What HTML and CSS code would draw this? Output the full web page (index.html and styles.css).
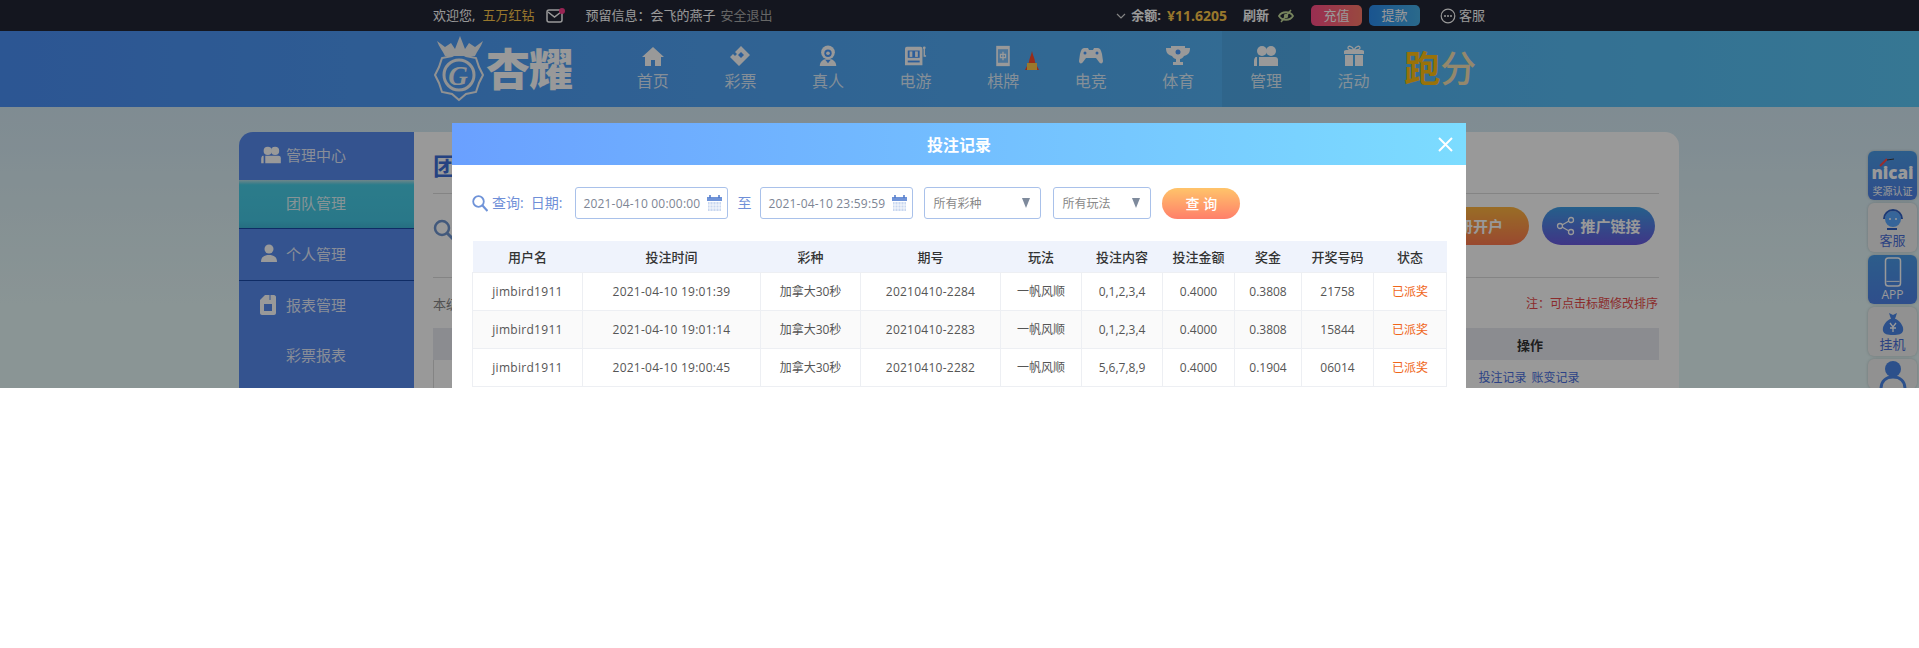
FILE: index.html
```html
<!DOCTYPE html>
<html lang="zh">
<head>
<meta charset="utf-8">
<title>投注记录</title>
<link rel="stylesheet" href="styles.css">
</head>
<body>
<div class="page">
  <div class="topbar">
    <div class="topbar-in">
      <span>欢迎您,</span><span class="gold name">五万红钻</span>
      <span class="mail"><svg width="19" height="15" viewBox="0 0 19 15"><rect x="1" y="2" width="15" height="12" rx="2" fill="none" stroke="#fff" stroke-width="1.5"/><path d="M2 4l6.500 5 6.500-5" fill="none" stroke="#fff" stroke-width="1.500"/><circle cx="16" cy="3" r="3" fill="#ff3d8b"/></svg></span>
      <span class="info">预留信息：会飞的燕子</span><span class="logout">安全退出</span>
      <div class="top-right">
        <svg class="chev" width="10" height="6" viewBox="0 0 10 6"><path d="M1 1l4 4 4-4" fill="none" stroke="#ddd" stroke-width="1.200"/></svg>
        <b class="bal">余额:</b><b class="gold money">¥11.6205</b>
        <b class="refresh">刷新</b>
        <svg class="eye" width="16" height="14" viewBox="0 0 16 14"><path d="M1 7c3-5 11-5 14 0-3 5-11 5-14 0z" fill="none" stroke="#c6dc9c" stroke-width="1.800"/><circle cx="8" cy="7" r="2.200" fill="#c6dc9c"/><path d="M13 1L3 13" stroke="#c6dc9c" stroke-width="1.500"/></svg>
        <span class="tbtn red">充值</span><span class="tbtn blue">提款</span>
        <svg class="chat" width="16" height="16" viewBox="0 0 16 16"><circle cx="8" cy="8" r="6.800" fill="none" stroke="#fff" stroke-width="1.200"/><circle cx="5" cy="8" r="1" fill="#fff"/><circle cx="8" cy="8" r="1" fill="#fff"/><circle cx="11" cy="8" r="1" fill="#fff"/></svg>
        <span class="kefu">客服</span>
      </div>
    </div>
  </div>

  <header class="header">
    <div class="header-in">
      <div class="logo">
        <svg width="54" height="68" viewBox="0 0 54 68"><path d="M4 6C6 12 10 16 12 21H42C44 16 48 12 50 6L42 12 36 8 32 14 27 1 22 14 18 8 12 12z" fill="#f2f3f4"/><path d="M26 65L19 59 9 57 6 48 2 40 6 32 9 23 19 21 26 17 33 21 43 23 46 32 50 40 46 48 43 57 33 59z" fill="none" stroke="#f2f3f4" stroke-width="2"/><circle cx="26" cy="40" r="15" fill="none" stroke="#f2f3f4" stroke-width="3"/><text x="25" y="50" text-anchor="middle" class="logo-g">G</text></svg>
        <span class="logo-text">杏耀</span>
      </div>
      <nav class="nav">
        <a class="nav-item"><svg width="24" height="22" viewBox="0 0 24 22"><path d="M12 2L1 12h3v9h6v-6h4v6h6v-9h3z" fill="#fff"/></svg><span>首页</span></a>
        <a class="nav-item"><svg width="24" height="22" viewBox="0 0 24 22"><path d="M13 1l9 9-11 11-9-9 3-3 2 2 2-2-2-2z" fill="#fff"/><path d="M13 7l3 3-3 3-3-3z" fill="#4a9cff"/></svg><span>彩票</span></a>
        <a class="nav-item"><svg width="24" height="24" viewBox="0 0 24 24"><circle cx="12" cy="8" r="7.500" fill="#fff"/><circle cx="12" cy="9" r="4" fill="#4a9cff"/><circle cx="12" cy="9" r="2" fill="#fff"/><path d="M3 23c0-5 4-8 9-8s9 3 9 8z" fill="#fff"/><path d="M9 16l3 4 3-4z" fill="#4a9cff"/></svg><span>真人</span></a>
        <a class="nav-item"><svg width="26" height="24" viewBox="0 0 26 24"><path d="M3 2h15c1 0 2 1 2 2v18H1V4c0-1 1-2 2-2z" fill="#fff"/><rect x="4" y="6" width="13" height="8" fill="#4a9cff"/><rect x="6" y="7" width="3" height="6" fill="#fff"/><rect x="12" y="7" width="3" height="6" fill="#fff"/><rect x="4" y="17" width="13" height="2" fill="#4a9cff"/><path d="M22 3v9h2" fill="none" stroke="#fff" stroke-width="1.500"/><circle cx="22" cy="3" r="1.500" fill="#fff"/></svg><span>电游</span></a>
        <a class="nav-item"><svg width="18" height="26" viewBox="0 0 18 26"><rect x="1" y="1" width="16" height="24" fill="#fff"/><rect x="3" y="5" width="12" height="16" fill="#7fc4ff"/><path d="M9 8v10M6 11h6v4H6z" fill="none" stroke="#fff" stroke-width="1.500"/></svg><span>棋牌</span>
          <svg class="hot" width="16" height="22" viewBox="0 0 16 22"><path d="M8 1c1 5 3 8 3 11l4 8H1l4-8c0-3 2-6 3-11z" fill="#ff4a2a"/><rect x="3" y="13" width="10" height="7" fill="#ffc84a"/></svg></a>
        <a class="nav-item"><svg width="26" height="22" viewBox="0 0 26 22"><path d="M6 3h4l1 2h4l1-2h4c2 0 3 2 4 6l1 7c0 3-3 3-4 1l-3-4H8l-3 4c-1 2-4 2-4-1l1-7c1-4 2-6 4-6z" fill="#fff"/><circle cx="7" cy="8" r="1.500" fill="#4a9cff"/><circle cx="19" cy="8" r="1.500" fill="#4a9cff"/></svg><span>电竞</span></a>
        <a class="nav-item"><svg width="24" height="22" viewBox="0 0 24 22"><path d="M5 1h14v2h5c0 5-2 7-6 8-1 2-3 3-4 3v3h3v3H7v-3h3v-3c-1 0-3-1-4-3-4-1-6-3-6-8h5z" fill="#fff"/><circle cx="12" cy="7" r="2.500" fill="#4a9cff"/></svg><span>体育</span></a>
        <a class="nav-item on"><svg width="26" height="22" viewBox="0 0 26 22"><circle cx="9" cy="6" r="5" fill="#fff"/><circle cx="18" cy="6" r="5" fill="#fff"/><path d="M6 12h16c2 0 3 1 3 3v6H6z" fill="#fff"/><path d="M4 12h-1c-1 0-2 2-2 4v5h3z" fill="#fff"/></svg><span>管理</span></a>
        <a class="nav-item"><svg width="22" height="22" viewBox="0 0 22 22"><path d="M3 5h16c1 0 2 1 2 1v3H1V6s1-1 2-1zM2 10h8v11H2zM12 10h8v11h-8z" fill="#fff"/><path d="M11 5C9 1 5 0 5 3c0 2 4 2 6 2zm0 0c2-4 6-5 6-2 0 2-4 2-6 2z" fill="none" stroke="#fff" stroke-width="1.300"/></svg><span>活动</span></a>
      </nav>
      <div class="paofen"><span class="pao">跑</span><span class="fen">分</span></div>
    </div>
  </header>

  <main class="main">
    <aside class="side">
      <div class="side-item first"><span class="side-slot"><svg width="22" height="18" viewBox="0 0 26 22"><circle cx="9" cy="6" r="5" fill="#fff"/><circle cx="18" cy="6" r="5" fill="#fff"/><path d="M6 12h16c2 0 3 1 3 3v6H6z" fill="#fff"/><path d="M4 12h-1c-1 0-2 2-2 4v5h3z" fill="#fff"/></svg></span><span>管理中心</span></div>
      <div class="side-item sub active"><span>团队管理</span></div>
      <div class="side-item line"><span class="side-slot"><svg width="18" height="18" viewBox="0 0 18 18"><circle cx="9" cy="5" r="4.500" fill="#fff"/><path d="M1 18c0-5 3-7 8-7s8 2 8 7z" fill="#fff"/></svg></span><span>个人管理</span></div>
      <div class="side-item"><span class="side-slot"><svg width="16" height="21" viewBox="0 0 16 21"><path d="M5 1h9c1 0 2 1 2 2v16c0 1-1 2-2 2H2c-1 0-2-1-2-2V6z" fill="#fff"/><rect x="4" y="10" width="8" height="7" fill="#578aef"/><path d="M10 1v5" stroke="#578aef"/></svg></span><span>报表管理</span></div>
      <div class="side-item sub"><span>彩票报表</span></div>
    </aside>
    <section class="panel">
      <h1 class="panel-title">团队管理</h1>
      <div class="panel-tools">
        <svg class="tool-search" width="22" height="22" viewBox="0 0 22 22"><circle cx="9" cy="9" r="7" fill="none" stroke="#6f95cf" stroke-width="2.500"/><path d="M14 14l6 6" stroke="#6f95cf" stroke-width="3"/></svg>
        <span class="pbtn orange">注册开户</span>
        <span class="pbtn violet"><svg width="20" height="20" viewBox="0 0 20 20"><circle cx="15" cy="4" r="2.500" fill="none" stroke="#fff" stroke-width="1.300"/><circle cx="4" cy="10" r="2.500" fill="none" stroke="#fff" stroke-width="1.300"/><circle cx="15" cy="16" r="2.500" fill="none" stroke="#fff" stroke-width="1.300"/><path d="M6 9l7-4M6 11l7 4" stroke="#fff" stroke-width="1.300"/></svg>推广链接</span>
      </div>
      <div class="panel-note"><span>本级</span><span class="note-red">注：可点击标题修改排序</span></div>
      <div class="under-head"><span class="op">操作</span></div>
      <div class="under-row"><span class="op-links"><a>投注记录</a><a>账变记录</a></span></div>
    </section>
  </main>

  <div class="floats">
    <div class="fl blue-fl nicai-fl"><svg class="nicai-mark" width="16" height="9" viewBox="0 0 16 9"><path d="M1 8L8 1" stroke="#ff4a4a" stroke-width="2"/><path d="M8 2l7-1" stroke="#3a3a3a" stroke-width="1"/></svg><span class="nicai">nicai</span><span class="fl-t small">奖源认证</span></div>
    <div class="fl"><svg width="24" height="24" viewBox="0 0 24 24"><circle cx="12" cy="11" r="8" fill="#5aa8ff"/><path d="M3 11a9 9 0 0 1 18 0" fill="none" stroke="#2e5fc4" stroke-width="2"/><circle cx="9" cy="11" r="1" fill="#fff"/><circle cx="15" cy="11" r="1" fill="#fff"/><path d="M6 21h10" stroke="#2e5fc4" stroke-width="2"/></svg><span class="fl-t">客服</span></div>
    <div class="fl blue-fl"><svg width="20" height="30" viewBox="0 0 20 32"><rect x="2" y="1" width="16" height="30" rx="3" fill="none" stroke="#fff" stroke-width="1.600"/><path d="M3 26h14" stroke="#fff"/></svg><span class="fl-t app">APP</span></div>
    <div class="fl"><svg width="24" height="24" viewBox="0 0 24 24"><path d="M8 1l4 2 4-2-2 6h-4z" fill="#4a86e8"/><path d="M9 7h6c5 3 8 8 7 12-1 3-4 4-10 4S3 22 2 19C1 15 4 10 9 7z" fill="#4a86e8"/><path d="M9 11l3 4 3-4M12 15v5M9 16h6" fill="none" stroke="#fff" stroke-width="1.300"/></svg><span class="fl-t">挂机</span></div>
    <div class="fl fl-user"><svg width="30" height="30" viewBox="0 0 30 30"><circle cx="15" cy="10" r="8" fill="#4a86e8"/><path d="M3 30c0-8 5-12 12-12s12 4 12 12" fill="none" stroke="#4a86e8" stroke-width="3"/></svg></div>
  </div>

  <div class="mask"></div>

  <div class="modal">
    <div class="modal-head"><span class="modal-title">投注记录</span>
      <svg class="modal-close" width="15" height="15" viewBox="0 0 15 15"><path d="M1 1l13 13M14 1L1 14" stroke="#fff" stroke-width="2"/></svg>
    </div>
    <div class="modal-body">
      <div class="filters">
        <svg class="f-search" width="16" height="17" viewBox="0 0 16 17"><circle cx="6.500" cy="6.500" r="5.300" fill="none" stroke="#6f93d8" stroke-width="1.800"/><path d="M10.500 10.500l5 5.500" stroke="#6f93d8" stroke-width="2.200"/></svg>
        <span class="f-label q">查询:</span><span class="f-label d">日期:</span>
        <div class="f-input"><span>2021-04-10 00:00:00</span><svg class="cal" width="15" height="16" viewBox="0 0 15 16"><path d="M0 2h15v4H0z" fill="#6f93d8"/><path d="M3 0v3M12 0v3" stroke="#4f78c8" stroke-width="1.500"/><path d="M1 7h13v9H1z" fill="#c9d7f0"/><path d="M3 7v9M6 7v9M9 7v9M12 7v9M1 10h13M1 13h13" stroke="#fff" stroke-width=".8"/></svg></div>
        <span class="f-label to">至</span>
        <div class="f-input"><span>2021-04-10 23:59:59</span><svg class="cal" width="15" height="16" viewBox="0 0 15 16"><path d="M0 2h15v4H0z" fill="#6f93d8"/><path d="M3 0v3M12 0v3" stroke="#4f78c8" stroke-width="1.500"/><path d="M1 7h13v9H1z" fill="#c9d7f0"/><path d="M3 7v9M6 7v9M9 7v9M12 7v9M1 10h13M1 13h13" stroke="#fff" stroke-width=".8"/></svg></div>
        <div class="f-select s1"><span>所有彩种</span><i class="tri"></i></div>
        <div class="f-select s2"><span>所有玩法</span><i class="tri"></i></div>
        <span class="f-btn">查 询</span>
      </div>
      <table class="records">
        <thead>
          <tr><th>用户名</th><th>投注时间</th><th>彩种</th><th>期号</th><th>玩法</th><th>投注内容</th><th>投注金额</th><th>奖金</th><th>开奖号码</th><th>状态</th></tr>
        </thead>
        <tbody>
          <tr><td>jimbird1911</td><td>2021-04-10 19:01:39</td><td>加拿大30秒</td><td>20210410-2284</td><td>一帆风顺</td><td>0,1,2,3,4</td><td>0.4000</td><td>0.3808</td><td>21758</td><td class="st">已派奖</td></tr>
          <tr><td>jimbird1911</td><td>2021-04-10 19:01:14</td><td>加拿大30秒</td><td>20210410-2283</td><td>一帆风顺</td><td>0,1,2,3,4</td><td>0.4000</td><td>0.3808</td><td>15844</td><td class="st">已派奖</td></tr>
          <tr><td>jimbird1911</td><td>2021-04-10 19:00:45</td><td>加拿大30秒</td><td>20210410-2282</td><td>一帆风顺</td><td>5,6,7,8,9</td><td>0.4000</td><td>0.1904</td><td>06014</td><td class="st">已派奖</td></tr>
        </tbody>
      </table>
    </div>
  </div>
</div>
</body>
</html>
```

FILE: styles.css
```css
* { box-sizing: border-box; }
html, body { margin: 0; padding: 0; background: #fff; }
body { font-family: "Open Sans", "Noto Sans CJK SC", "Noto Sans", sans-serif; font-size: 14px; color: #333; }
a { text-decoration: none; color: inherit; }

.page { position: relative; width: 1919px; height: 388px; overflow: hidden; background: #dff2f6; }

.topbar { height: 31px; background: #222534; color: #fff; font-size: 13px; }
.topbar-in { height: 31px; padding: 0 434px 0 433px; display: flex; align-items: center; line-height: 31px; }
.gold { color: #ffc94a; }
.name { margin-left: 7px; }
.mail { margin-left: 12px; display: flex; }
.info { margin-left: 20px; }
.logout { margin-left: 5px; color: #aaa; }
.top-right { margin-left: auto; display: flex; align-items: center; }
.bal { margin-left: 5px; }
.money { margin-left: 6px; font-size: 14px; }
.refresh { margin-left: 16px; }
.eye { margin-left: 9px; }
.tbtn { width: 51px; height: 21px; border-radius: 5px; line-height: 21px; text-align: center; color: #fff; }
.tbtn.red { margin-left: 17px; background: linear-gradient(90deg, #ff4d88, #ff7a6a); }
.tbtn.blue { margin-left: 7px; background: linear-gradient(90deg, #2b8df0, #47b0e8); }
.chat { margin-left: 20px; }
.kefu { margin-left: 3px; }

.header { height: 76px; background: linear-gradient(90deg, #4a8ff5, #5ac6f5); }
.header-in { height: 76px; padding-left: 433px; display: flex; }
.logo { width: 175px; display: flex; align-items: center; }
.logo-g { font: italic bold 27px "Liberation Serif", serif; fill: #f2f3f4; }
.logo-text { margin-left: -1px; font-size: 44px; font-weight: 900; line-height: 76px; letter-spacing: -1px; color: #fff; }
.nav { display: flex; padding-left: 1px; }
.nav-item { position: relative; width: 87.6px; height: 76px; padding-top: 14px; display: flex; flex-direction: column; align-items: center; color: rgba(255, 255, 255, .82); font-size: 16px; line-height: 22px; }
.nav-item svg { height: 22px; margin-bottom: 3px; }
.nav-item.on { background: rgba(0, 0, 0, .05); }
.nav-item .hot { position: absolute; top: 19px; left: 65px; margin: 0; }
.paofen { margin-left: 7px; font-size: 36px; font-weight: 700; line-height: 76px; display: flex; }
.pao { color: #ffbe10; }
.fen { color: #f7e3b4; font-weight: 500; }

.main { padding: 25px 0 0 239px; display: flex; background: linear-gradient(180deg, #d4e9f4, #e6f8f8 70%); height: 281px; }
.side { width: 175px; height: 300px; flex: none; background: #578aef; border-radius: 14px 0 0 0; color: rgba(255, 255, 255, .85); font-size: 15px; overflow: hidden; }
.side-item { display: flex; align-items: center; height: 50px; padding: 0 0 3px 21px; }
.side-slot { width: 26px; display: flex; flex: none; }
.side-item.first { height: 48px; }
.side-item.sub { height: 49px; padding-left: 47px; }
.side-item.active { background: linear-gradient(180deg, #b8dfe6 0, #49cfe8 10%, #45c8e4 85%, #3fb8d8); border-bottom: 1px solid #1a4aa8; }
.side-item.line { height: 52px; border-bottom: 1px solid #1a4aa8; }

.panel { width: 1265px; height: 300px; background: #fff; border-radius: 0 14px 0 0; padding: 0 20px 0 19px; }
.panel-title { margin: 0; height: 62px; border-bottom: 1px solid #ddd; font-size: 24px; line-height: 68px; color: #3f6fd8; font-weight: 700; }
.panel-tools { height: 84px; border-bottom: 1px solid #ddd; display: flex; align-items: flex-start; padding-top: 13px; }
.tool-search { margin: 12px auto 0 0; }
.pbtn { height: 38px; border-radius: 19px; color: #fff; font-weight: 700; font-size: 15px; line-height: 38px; display: flex; align-items: center; justify-content: center; }
.pbtn.orange { width: 112px; background: linear-gradient(180deg, #ffb640, #ff7a50); }
.pbtn.violet { width: 113px; margin: 0 4px 0 13px; background: linear-gradient(180deg, #3f9fe8, #6a5ae0); }
.pbtn.violet svg { margin-right: 4px; }
.panel-note { height: 50px; display: flex; justify-content: space-between; align-items: center; color: #888; font-size: 13px; }
.note-red { margin-right: 1px; color: #e84a4a; font-size: 12px; }
.under-head { height: 32px; background: #e8eaf0; display: flex; justify-content: flex-end; align-items: center; font-weight: 700; font-size: 13px; color: #333; }
.op { width: 260px; padding-left: 2px; text-align: center; }
.under-row { height: 36px; border-left: 1px solid #ddd; display: flex; justify-content: flex-end; align-items: center; font-size: 12px; line-height: 14px; }
.op-links { width: 260px; display: flex; justify-content: center; gap: 5px; color: #4a6fe0; }

.floats { position: absolute; top: 151px; left: 1868px; width: 49px; display: flex; flex-direction: column; gap: 3px; }
.fl { position: relative; height: 49px; flex: none; border-radius: 6px; background: #f2f2f2; display: flex; flex-direction: column; align-items: center; justify-content: center; color: #4a6fd8; box-shadow: 0 0 3px rgba(0, 0, 0, .2); }
.blue-fl { background: linear-gradient(180deg, #4a9be8, #4f82e8); color: #fff; }
.nicai-fl { justify-content: flex-end; padding-bottom: 2px; }
.nicai-mark { position: absolute; top: 7px; left: 11px; }
.fl-user { height: 30px; overflow: hidden; justify-content: flex-start; }
.fl-t { font-size: 13px; line-height: 16px; }
.fl-t.small { font-size: 10px; line-height: 14px; }
.fl-t.app { font-size: 12px; }
.nicai { font-weight: 800; font-size: 17px; line-height: 22px; }

.mask { position: absolute; inset: 0; background: rgba(0, 0, 0, .4); }

.modal { position: absolute; top: 123px; left: 452px; width: 1014px; height: 500px; background: #fff; }
.modal-head { position: relative; height: 42px; background: linear-gradient(90deg, #6aa0ff, #7cdcff); display: flex; justify-content: center; align-items: center; }
.modal-title { color: #fff; font-size: 16px; font-weight: 700; }
.modal-close { position: absolute; top: 14px; right: 13px; }
.modal-body { padding: 22px 19px 0 20px; }
.filters { display: flex; align-items: center; height: 32px; }
.f-label { color: #6f8fd8; font-size: 14px; line-height: 32px; }
.f-label.q { margin-left: 4px; }
.f-label.d { margin-left: 7px; margin-right: 1px; }
.f-label.to { margin: 0 9px; }
.f-input { width: 153px; height: 32px; margin-left: 12px; padding: 0 5px 0 7px; border: 1px solid #a9c1ea; border-radius: 3px; display: flex; align-items: center; justify-content: space-between; font-size: 12px; color: #7d8594; letter-spacing: .2px; }
.f-label.to + .f-input { margin-left: 0; }
.f-select { height: 32px; padding: 0 10px 0 8px; border: 1px solid #a9c1ea; border-radius: 3px; display: flex; align-items: center; justify-content: space-between; font-size: 12px; color: #888; }
.f-select.s1 { width: 117px; margin-left: 11px; }
.f-select.s2 { width: 98px; margin-left: 12px; }
.tri { width: 0; height: 0; border-left: 4px solid transparent; border-right: 4px solid transparent; border-top: 10px solid #7e8a9c; }
.f-btn { width: 78px; height: 31px; margin-left: 11px; border-radius: 16px; background: linear-gradient(180deg, #ffc46a, #ff7f6a); color: #fff; font-size: 14px; font-weight: 500; line-height: 31px; text-align: center; }

.records { margin-top: 22px; width: 974px; table-layout: fixed; border-collapse: collapse; font-size: 12px; color: #555; text-align: center; }
.records th { height: 31px; padding: 0; background: #eff3fc; border: 0; font-size: 13px; font-weight: 500; color: #333; }
.records td { height: 38px; padding: 0; border: 1px solid #edeff3; }
.records td:nth-child(1) { letter-spacing: .3px; }
.records td:nth-child(2), .records td:nth-child(4) { letter-spacing: .25px; }
.records tr:nth-child(2) td { background: #fafafa; }
.records .st { color: #f0661a; }
.records th:nth-child(1) { width: 110px; }
.records th:nth-child(2) { width: 178px; }
.records th:nth-child(3) { width: 100px; }
.records th:nth-child(4) { width: 140px; }
.records th:nth-child(5) { width: 81px; }
.records th:nth-child(6) { width: 81px; }
.records th:nth-child(7) { width: 72px; }
.records th:nth-child(8) { width: 67px; }
.records th:nth-child(9) { width: 72px; }
.records th:nth-child(10) { width: 73px; }
```
